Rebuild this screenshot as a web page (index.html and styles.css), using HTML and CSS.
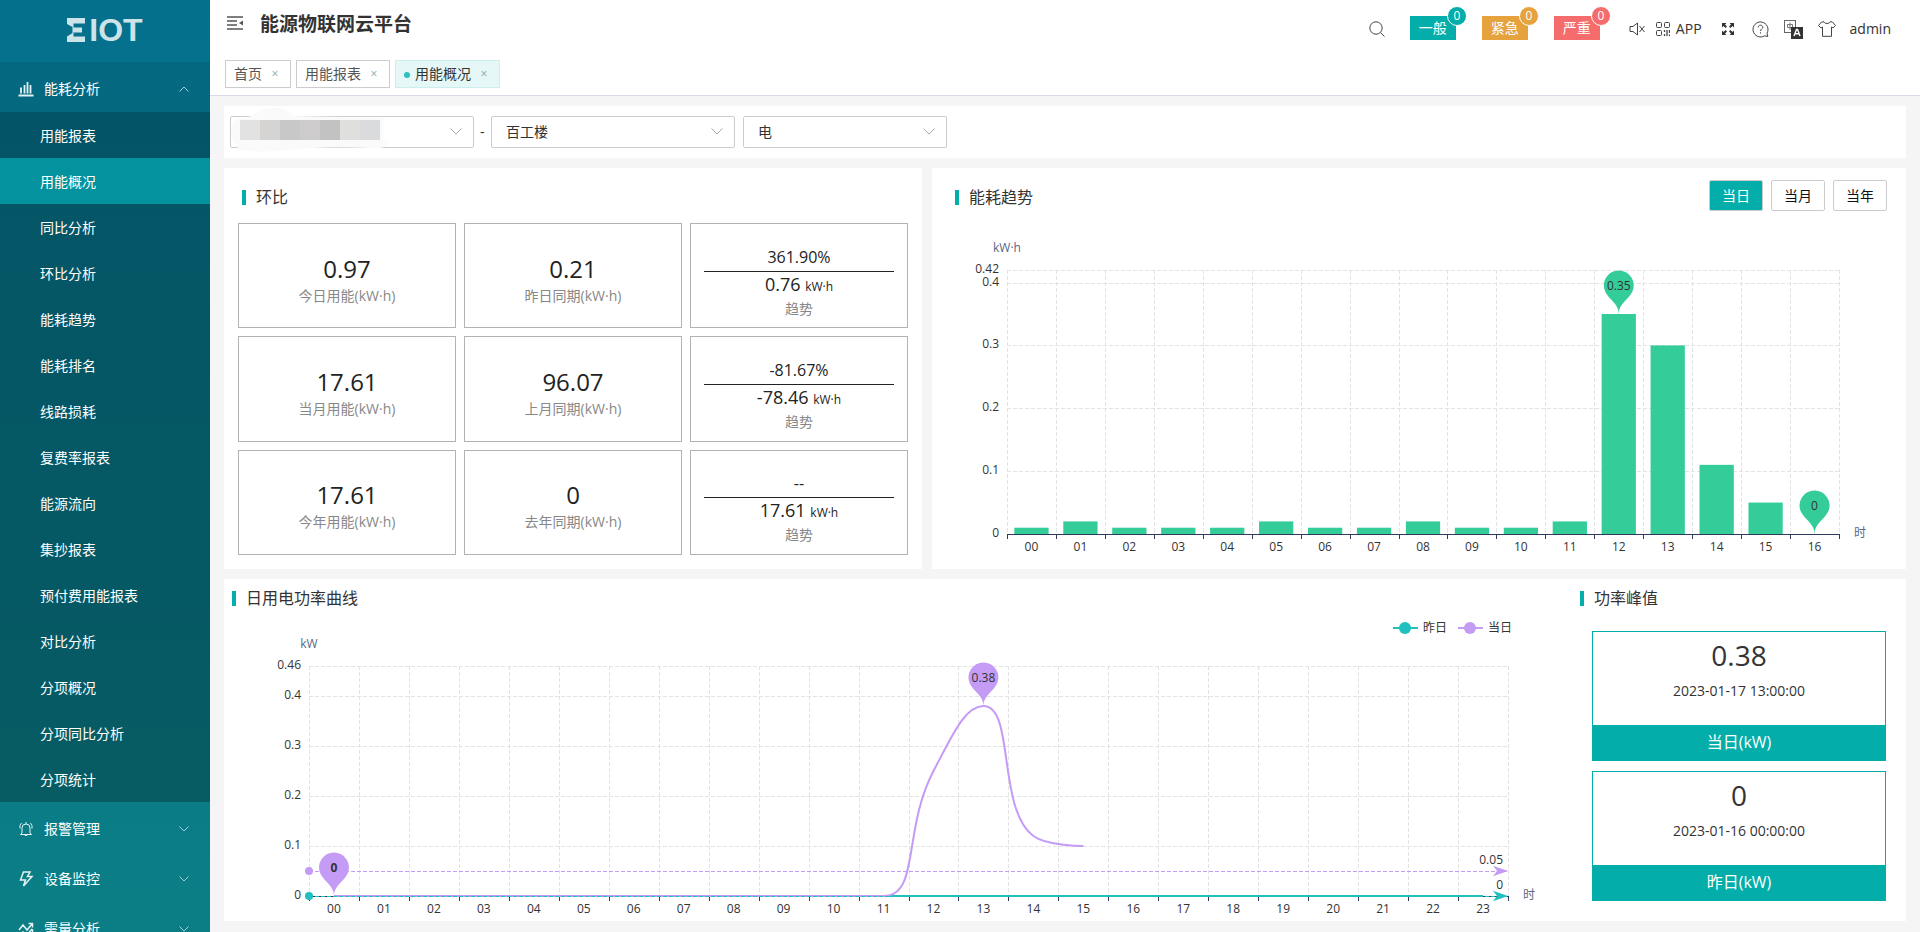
FILE: index.html
```html
<!DOCTYPE html>
<html lang="zh-CN">
<head>
<meta charset="utf-8">
<title>能源物联网云平台</title>
<link rel="stylesheet" href="styles.css">
</head>
<body>
<div class="app">
  <aside class="sidebar">
    <div class="logo">
      <svg class="logo-mark" viewBox="0 0 18 24" width="18" height="24" aria-hidden="true"><path d="M0 0H18V5.500H6.500V9.500H15V14.500H6.500V18.500H18V24H0V18.500L5.500 15V9L0 6Z"/></svg>
      <span class="logo-text">IOT</span>
    </div>
    <nav class="menu">
      <button class="group open" type="button">
        <svg class="group-icon" viewBox="0 0 16 16" width="16" height="16" aria-hidden="true"><path d="M.5 14.500h15M3 12.500V6.500M6.500 12.500V4M9.500 12.500V1M12.500 12.500V4" stroke-width="1.800"/></svg>
        <span>能耗分析</span>
        <svg class="caret" viewBox="0 0 10 6" width="10" height="6" aria-hidden="true"><path d="M.5 5.500 5 1l4.500 4.500"/></svg>
      </button>
      <ul class="submenu">
        <li><a href="#">用能报表</a></li>
        <li><a href="#" class="active">用能概况</a></li>
        <li><a href="#">同比分析</a></li>
        <li><a href="#">环比分析</a></li>
        <li><a href="#">能耗趋势</a></li>
        <li><a href="#">能耗排名</a></li>
        <li><a href="#">线路损耗</a></li>
        <li><a href="#">复费率报表</a></li>
        <li><a href="#">能源流向</a></li>
        <li><a href="#">集抄报表</a></li>
        <li><a href="#">预付费用能报表</a></li>
        <li><a href="#">对比分析</a></li>
        <li><a href="#">分项概况</a></li>
        <li><a href="#">分项同比分析</a></li>
        <li><a href="#">分项统计</a></li>
      </ul>
      <button class="group" type="button">
        <svg class="group-icon" viewBox="0 0 16 16" width="16" height="16" aria-hidden="true"><path d="M4 12V7a4 4 0 0 1 8 0v5l1.500 1.500h-11zM6.800 14.500h2.400M8 1v2M3.500 2 2 4.500v3M12.500 2 14 4.500v3"/></svg>
        <span>报警管理</span>
        <svg class="caret" viewBox="0 0 10 6" width="10" height="6" aria-hidden="true"><path d="M.5.5 5 5 9.500.5"/></svg>
      </button>
      <button class="group" type="button">
        <svg class="group-icon" viewBox="0 0 16 16" width="16" height="16" aria-hidden="true"><path d="M5.500 1H12L9.500 5.500H14L5.500 15 7.500 9H2.500z" stroke-width="1.500"/></svg>
        <span>设备监控</span>
        <svg class="caret" viewBox="0 0 10 6" width="10" height="6" aria-hidden="true"><path d="M.5.5 5 5 9.500.5"/></svg>
      </button>
      <button class="group" type="button">
        <svg class="group-icon" viewBox="0 0 16 16" width="16" height="16" aria-hidden="true"><path d="M1 9 5 4l4 5 5-6M10.500 2.500H14.500V6.500M1 14l4-3 4 3 5-6M14.500 8v7" stroke-width="1.500"/></svg>
        <span>需量分析</span>
        <svg class="caret" viewBox="0 0 10 6" width="10" height="6" aria-hidden="true"><path d="M.5.5 5 5 9.500.5"/></svg>
      </button>
    </nav>
  </aside>

  <div class="main">
    <header class="header">
      <div class="topbar">
        <button class="icon-btn" type="button" aria-label="收起菜单">
          <svg viewBox="0 0 16 14" width="16" height="14" aria-hidden="true"><path d="M0 1h16M0 5h10M0 9h10M0 13h16" fill="none" stroke="#555" stroke-width="1.500"/><path d="M16 4.500v5L12 7z" fill="#555"/></svg>
        </button>
        <h1 class="title">能源物联网云平台</h1>
        <div class="tools">
          <button class="icon-btn search" type="button" aria-label="搜索">
            <svg class="line" viewBox="0 0 16 16" width="16" height="16"><circle cx="7" cy="7" r="6.200"/><path d="m11.500 11.500 4 4"/></svg>
          </button>
          <a class="alarm normal" href="#">一般<span class="count">0</span></a>
          <a class="alarm urgent" href="#">紧急<span class="count">0</span></a>
          <a class="alarm severe" href="#">严重<span class="count">0</span></a>
          <button class="icon-btn mute" type="button" aria-label="静音">
            <svg class="line" viewBox="0 0 16 14" width="16" height="14"><path d="M1 4.500h3L8.500 1v12L4 9.500H1zM10.500 4l5 6M15.500 4l-5 6"/></svg>
          </button>
          <a class="app-link" href="#">
            <svg class="line" viewBox="0 0 14 14" width="14" height="14" aria-hidden="true"><rect x=".5" y=".5" width="5" height="5" rx="1"/><rect x="8.500" y=".5" width="5" height="5" rx="1"/><rect x=".5" y="8.500" width="5" height="5" rx="1"/><path d="M8.500 8v2M8.500 12v2M11 8v6M13.500 8v3M13.500 12.500V14" stroke-width="1.300"/></svg>
            APP</a>
          <button class="icon-btn full" type="button" aria-label="全屏">
            <svg viewBox="0 0 12 12" width="12" height="12"><path d="M0 0h4.500L3 1.500l2 2L3.500 5l-2-2L0 4.500zM12 0v4.500L10.500 3l-2 2L7 3.500l2-2L7.500 0zM0 12V7.500L1.500 9l2-2L5 8.500l-2 2L4.500 12zM12 12H7.500L9 10.500l-2-2L8.500 7l2 2L12 7.500z" fill="#333"/></svg>
          </button>
          <button class="icon-btn help" type="button" aria-label="帮助">
            <svg class="line" viewBox="0 0 17 17" width="17" height="17"><path d="M12.500 14.800A7.500 7.500 0 1 1 15 12.200L15.800 15.500z"/><path d="M6.200 6.500C6.200 5 7.200 4.200 8.500 4.200s2.300.8 2.300 2.100c0 1.700-2.300 1.700-2.300 3.700M8.500 11.300v1.200"/></svg>
          </button>
          <button class="icon-btn lang" type="button" aria-label="语言">
            <svg viewBox="0 0 19 19" width="19" height="19"><rect x=".5" y=".5" width="11" height="12" fill="#fff" stroke="#666"/><path d="M3.500 4.500h5v3h-5zM6 2.500V10" fill="none" stroke="#777"/><rect x="7" y="7" width="12" height="12" fill="#333"/><path d="m10 16 2.500-6.500h1L16 16M11.200 13.800h3.600" fill="none" stroke="#fff" stroke-width="1.400"/></svg>
          </button>
          <button class="icon-btn skin" type="button" aria-label="主题">
            <svg class="line" viewBox="0 0 18 16" width="18" height="16"><path d="M6 .8C6.500 3 11.500 3 12 .8L14.500 1 17.500 4.500 15 7l-1.500-1v9.300h-9V6L3 7 .5 4.500 3.500 1z"/></svg>
          </button>
          <a class="user" href="#">admin</a>
        </div>
      </div>
      <div class="tabs">
        <div class="tab"><a href="#">首页</a><button type="button" aria-label="关闭首页">×</button></div>
        <div class="tab"><a href="#">用能报表</a><button type="button" aria-label="关闭用能报表">×</button></div>
        <div class="tab current"><a href="#">用能概况</a><button type="button" aria-label="关闭用能概况">×</button></div>
      </div>
    </header>

    <main class="content">
      <form class="filters">
        <div class="select wide">
          <select aria-label="项目"><option></option></select>
          <svg class="chevron" viewBox="0 0 12 7" width="12" height="7" aria-hidden="true"><path d="M.5.5 6 6 11.500.5"/></svg>
          <svg class="mosaic" viewBox="0 0 160 46" width="160" height="46" aria-hidden="true">
            <path d="M1 18Q4 10 12 12L20 9Q32 0 46 1Q58 2 62 9L110 10L152 11V33Q160 34 156 39Q150 42 140 41Q90 39 60 43Q20 46 9 43Q-2 34 1 18Z" fill="#fafafa"/>
            <rect x="9" y="13" width="20" height="20" fill="#e2e2e2"/><rect x="29" y="13" width="20" height="20" fill="#d5d4d2"/><rect x="49" y="13" width="20" height="20" fill="#c8c8c8"/><rect x="69" y="13" width="20" height="20" fill="#cdcbcc"/><rect x="89" y="13" width="20" height="20" fill="#c2c2c2"/><rect x="109" y="13" width="20" height="20" fill="#dfdfde"/><rect x="129" y="13" width="20" height="20" fill="#dadbdd"/>
          </svg>
        </div>
        <span class="dash">-</span>
        <div class="select wide">
          <select aria-label="建筑"><option>百工楼</option></select>
          <svg class="chevron" viewBox="0 0 12 7" width="12" height="7" aria-hidden="true"><path d="M.5.5 6 6 11.500.5"/></svg>
        </div>
        <div class="select">
          <select aria-label="能源类型"><option>电</option></select>
          <svg class="chevron" viewBox="0 0 12 7" width="12" height="7" aria-hidden="true"><path d="M.5.5 6 6 11.500.5"/></svg>
        </div>
      </form>

      <div class="row upper">
        <section class="panel compare">
          <h2 class="heading">环比</h2>
          <div class="cells">
            <div class="cell"><strong>0.97</strong><span>今日用能(kW·h)</span></div>
            <div class="cell"><strong>0.21</strong><span>昨日同期(kW·h)</span></div>
            <div class="cell trend"><b>361.90%</b><i>0.76 <small>kW·h</small></i><span>趋势</span></div>
            <div class="cell"><strong>17.61</strong><span>当月用能(kW·h)</span></div>
            <div class="cell"><strong>96.07</strong><span>上月同期(kW·h)</span></div>
            <div class="cell trend"><b>-81.67%</b><i>-78.46 <small>kW·h</small></i><span>趋势</span></div>
            <div class="cell"><strong>17.61</strong><span>今年用能(kW·h)</span></div>
            <div class="cell"><strong>0</strong><span>去年同期(kW·h)</span></div>
            <div class="cell trend"><b>--</b><i>17.61 <small>kW·h</small></i><span>趋势</span></div>
          </div>
        </section>
        <section class="panel usage">
          <div class="usage-head">
            <h2 class="heading">能耗趋势</h2>
            <div class="periods">
              <button class="period on" type="button">当日</button>
              <button class="period" type="button">当月</button>
              <button class="period" type="button">当年</button>
            </div>
          </div>
          <div class="chart" id="usage-chart"></div>
        </section>
      </div>

      <div class="row lower panel">
        <section class="power">
          <h2 class="heading">日用电功率曲线</h2>
          <div class="chart" id="power-chart"></div>
        </section>
        <section class="peaks">
          <h2 class="heading">功率峰值</h2>
          <div class="peak"><strong>0.38</strong><time>2023-01-17 13:00:00</time><span>当日(kW)</span></div>
          <div class="peak"><strong>0</strong><time>2023-01-16 00:00:00</time><span>昨日(kW)</span></div>
        </section>
      </div>
    </main>
  </div>
</div>
<script src="charts.js"></script>
</body>
</html>
```

FILE: styles.css
```css
* { box-sizing: border-box; }

body {
  margin: 0;
  background: #f5f5f5;
  color: #333;
  font: 14px/20px "Open Sans", "Noto Sans CJK SC", sans-serif;
}

a { color: inherit; text-decoration: none; }

button {
  padding: 0;
  border: 0;
  background: none;
  color: inherit;
  font: inherit;
  cursor: pointer;
}

h1, h2, ul { margin: 0; padding: 0; }

.app {
  display: grid;
  grid-template-columns: 210px minmax(0, 1fr);
  height: 100vh;
  overflow: hidden;
}

/* Sidebar */
.sidebar {
  overflow: hidden;
  background: linear-gradient(#05708c, #0b7e85);
  color: #fff;
}

.logo {
  display: flex;
  align-items: center;
  justify-content: center;
  gap: 4px;
  height: 62px;
  padding-bottom: 2px;
  color: #cde3ea;
}

.logo-mark { fill: currentColor; }

.logo-text {
  font-family: "Liberation Sans", sans-serif;
  font-size: 32px;
  font-weight: 700;
  line-height: 32px;
}

.group {
  display: flex;
  align-items: center;
  gap: 10px;
  width: 100%;
  height: 50px;
  padding: 4px 21px 0 18px;
  text-align: left;
}

.group.open { background: rgba(0, 0, 0, .08); }
.group span { flex: 1; }

.group-icon, .caret {
  fill: none;
  stroke: #e3f2f4;
}

.caret { stroke: #a5cfd6; }

.submenu {
  list-style: none;
  background: rgba(0, 0, 0, .26);
}

.submenu a {
  display: block;
  padding: 2px 0 0 40px;
  line-height: 44px;
}

.submenu .active { background: #03929e; }

/* Header */
.main {
  display: flex;
  flex-direction: column;
  min-width: 0;
}

.header {
  padding: 0 15px;
  border-bottom: 1px solid #d8dce8;
  background: #fff;
}

.topbar {
  display: flex;
  align-items: center;
  gap: 17px;
  height: 46px;
  padding-left: 2px;
}

.title {
  flex: 1;
  padding-top: 2px;
  font-size: 19px;
  line-height: 28px;
}

.icon-btn svg { display: block; }

.line {
  fill: none;
  stroke: #444;
}

.tools {
  display: flex;
  align-items: center;
  padding: 12px 14px 0 0;
}

.search { margin-right: 25px; }

.alarm {
  position: relative;
  width: 46px;
  margin: 0 26px 2px 0;
  color: #fff;
  line-height: 24px;
  text-align: center;
}

.normal, .normal .count { background: #03aeaa; }
.urgent, .urgent .count { background: #e6a23c; }
.severe, .severe .count { background: #f56c6c; }

.count {
  position: absolute;
  top: -10px;
  right: -11px;
  width: 20px;
  border: 1px solid #fff;
  border-radius: 10px;
  font-size: 12px;
  line-height: 18px;
}

.mute { margin: 0 11px 0 3px; }

.app-link {
  display: flex;
  align-items: center;
  gap: 6px;
  margin-right: 20px;
}

.full { margin-right: 18px; }
.help { margin-right: 15px; }
.lang { margin-right: 15px; }
.skin { margin-right: 14px; }

.tabs {
  display: flex;
  gap: 5px;
  padding: 14px 0 7px;
}

.tab {
  display: flex;
  align-items: center;
  height: 28px;
  padding: 0 8px;
  border: 1px solid #ccc;
  color: #555;
}

.tab button {
  width: 20px;
  padding-left: 6px;
  color: #8aa;
  font-size: 12px;
}

.tab.current {
  border-color: #c9eeec;
  background: #e5f7f7;
  color: #333;
}

.tab.current::before {
  content: "";
  width: 6px;
  height: 6px;
  margin: 2px 5px 0 0;
  border-radius: 50%;
  background: #2fbfbf;
}

/* Content */
.content {
  display: flex;
  flex: 1;
  flex-direction: column;
  gap: 10px;
  min-height: 0;
  padding: 10px 14px 11px;
}

.filters {
  display: flex;
  align-items: center;
  gap: 8px;
  padding: 10px 6px;
  background: #fff;
}

.select {
  position: relative;
  width: 204px;
}

.select.wide { width: 244px; }

.select select {
  width: 100%;
  height: 32px;
  padding: 0 14px;
  border: 1px solid #ccc;
  border-radius: 2px;
  appearance: none;
  background: #fff;
  color: #333;
  font: inherit;
}

.chevron {
  position: absolute;
  top: 12px;
  right: 12px;
  fill: none;
  stroke: #aaa;
  pointer-events: none;
}

.mosaic {
  position: absolute;
  top: -9px;
  left: 1px;
  pointer-events: none;
}

.dash { width: 1px; margin: 0 2px 0 -2px; }
.panel { background: #fff; }

.row {
  display: grid;
  min-height: 0;
}

.upper {
  flex: 401 1 0;
  grid-template-columns: 698fr 974fr;
  gap: 10px;
}

.lower {
  flex: 342 1 0;
  grid-template-columns: minmax(0, 1fr) 336px;
}

.heading {
  display: flex;
  align-items: center;
  gap: 10px;
  font-size: 16px;
  font-weight: 400;
  line-height: 24px;
}

.heading::before {
  content: "";
  width: 4px;
  height: 15px;
  background: #03aeaa;
}

.compare {
  display: flex;
  flex-direction: column;
  padding: 17px 14px 14px;
}

.compare .heading { padding-left: 4px; }

.cells {
  display: grid;
  flex: 1;
  grid-template-columns: repeat(3, 1fr);
  grid-auto-rows: 1fr;
  gap: 8px;
  margin-top: 14px;
}

.cell {
  display: flex;
  flex-direction: column;
  align-items: center;
  justify-content: center;
  padding: 6px 13px 0;
  border: 1px solid #b3b3b3;
  color: #222;
}

.cell.trend { padding-top: 10px; }

.cell strong {
  font-size: 24px;
  font-weight: 400;
  line-height: 34px;
}

.cell span { color: #888; }

.cell b, .cell i {
  font-size: 16px;
  font-style: normal;
  font-weight: 400;
  line-height: 28px;
}

.cell b {
  width: 100%;
  border-bottom: 1px solid #222;
  text-align: center;
}

.cell i {
  font-size: 18px;
  line-height: 24px;
}

.cell small { font-size: 12px; }

.usage, .power {
  display: flex;
  flex-direction: column;
  min-width: 0;
}

.usage-head {
  display: flex;
  align-items: flex-start;
  justify-content: space-between;
  padding: 12px 19px 9px 23px;
}

.usage .heading { padding-top: 5px; }

.periods {
  display: flex;
  gap: 8px;
}

.period {
  width: 54px;
  height: 31px;
  border: 1px solid #ccc;
  border-radius: 2px;
  color: #111;
}

.period.on {
  background: #03aeaa;
  color: #fff;
}

.chart {
  flex: 1;
  min-height: 0;
  overflow: hidden;
}

.chart svg { display: block; }

.chart text {
  fill: #333;
  font-size: 12px;
}

.chart .axis-name { fill: #5a6785; }
.grid-line { stroke: #e3e3e3; stroke-dasharray: 4 2; }
.axis-line { stroke: #2f3a5f; }

.power .heading { padding: 7px 0 0 8px; }

.peaks {
  display: flex;
  flex-direction: column;
  gap: 10px;
  padding: 7px 20px 20px 22px;
}

.peaks .heading {
  margin: 0 0 11px -12px;
}

.peak {
  display: flex;
  flex: 1;
  flex-direction: column;
  align-items: center;
  border: 1px solid #03aeaa;
}

.peak strong {
  padding-top: 5px;
  font-size: 28px;
  font-weight: 400;
  line-height: 36px;
}

.peak time {
  flex: 1;
  padding-top: 8px;
}

.peak span {
  align-self: stretch;
  background: #03aeaa;
  color: #fff;
  font-size: 16px;
  line-height: 35px;
  text-align: center;
}
```

FILE: charts.js
```js
(function () {
  var TEAL = '#1fc0be', PURPLE = '#c49bf5', GREEN = '#34cc99';

  function pad(n) { return (n < 10 ? '0' : '') + n; }
  function line(x1, y1, x2, y2, attrs) {
    return '<line x1="' + x1 + '" y1="' + y1 + '" x2="' + x2 + '" y2="' + y2 + '" ' + attrs + '/>';
  }
  function text(x, y, anchor, value, attrs) {
    return '<text x="' + x + '" y="' + y + '" text-anchor="' + anchor + '" ' + (attrs || '') + '>' + value + '</text>';
  }
  function crisp(v) { return Math.round(v) + 0.5; }

  /* Balloon whose tip sits on (x, y). */
  function pin(x, y, color, label, labelAttrs) {
    return '<g transform="translate(' + x + ' ' + y + ')">' +
      '<path fill="' + color + '" d="M-13.550-22.140A15 15 0 1 1 13.550-22.140C9.690-14.010 0-10.500 0 0C0-10.500-9.690-14.010-13.550-22.140Z"/>' +
      text(0, -24, 'middle', label, labelAttrs) + '</g>';
  }

  function arrow(x, y, color) {
    return '<path fill="' + color + '" d="M' + x + ' ' + y + 'l-15-5.300 4 5.300-4 5.300z"/>';
  }

  function frame(el, o) {
    var w = el.clientWidth, h = el.clientHeight;
    var f = { w: w, h: h, l: o.left, r: w - o.right, t: o.top, b: h - o.bottom };
    f.step = (f.r - f.l) / o.count;
    f.x = function (i) { return f.l + f.step * (i + 0.5); };
    f.y = function (v) { return f.b - (f.b - f.t) * v / o.max; };
    var s = '', i;
    [0.1, 0.2, 0.3, 0.4, o.max].forEach(function (v) {
      s += line(f.l, crisp(f.y(v)), f.r, crisp(f.y(v)), 'class="grid-line"');
      s += text(f.l - 8, f.y(v) + 3, 'end', v);
    });
    s += text(f.l - 8, f.b + 3, 'end', '0');
    for (i = 0; i <= o.count; i++) {
      var gx = crisp(f.l + f.step * i);
      s += line(gx, f.t, gx, f.b, 'class="grid-line"');
      s += line(gx, f.b, gx, f.b + 5, 'class="axis-line"');
      if (i < o.count) s += text(f.x(i), f.b + 17, 'middle', pad(i));
    }
    s += line(f.l, crisp(f.b), f.r, crisp(f.b), 'class="axis-line"');
    s += text(f.l, f.t - 18, 'middle', o.unit, 'class="axis-name"');
    s += text(f.r + 15, f.b + 3, 'start', '时', 'class="axis-name"');
    f.svg = s;
    return f;
  }

  function mount(el, f, body) {
    el.innerHTML = '<svg width="' + f.w + '" height="' + f.h + '" role="img">' + f.svg + body + '</svg>';
  }

  function drawUsage() {
    var el = document.getElementById('usage-chart');
    var data = [.01, .02, .01, .01, .01, .02, .01, .01, .02, .01, .01, .02, .35, .3, .11, .05, 0];
    var f = frame(el, { left: 75, right: 67, top: 50, bottom: 35, count: 17, max: 0.42, unit: 'kW·h' });
    var bw = f.step * 0.7, s = '';
    data.forEach(function (v, i) {
      s += '<rect x="' + (f.x(i) - bw / 2) + '" y="' + f.y(v) + '" width="' + bw + '" height="' + (f.b - f.y(v)) + '" fill="' + GREEN + '"/>';
    });
    s += pin(f.x(12), f.y(.35), GREEN, '0.35');
    s += pin(f.x(16), f.y(0), GREEN, '0');
    mount(el, f, s);
  }

  /* Smooth curve whose control points never leave the span of their neighbours. */
  function smooth(pts) {
    function clamp(v, a, b) { return Math.max(Math.min(a, b), Math.min(Math.max(a, b), v)); }
    var d = 'M' + pts[0], out = pts[0];
    for (var i = 1; i < pts.length; i++) {
      var q = pts[i - 1], p = pts[i], n = pts[i + 1], into = p, next = p;
      if (n) {
        var lp = Math.hypot(p[0] - q[0], p[1] - q[1]), ln = Math.hypot(n[0] - p[0], n[1] - p[1]);
        var k = 0.5 * ln / (ln + lp);
        next = [0, 1].map(function (a) { return clamp(p[a] + (n[a] - q[a]) * k, p[a], n[a]); });
        into = [0, 1].map(function (a) { return clamp(p[a] - (next[a] - p[a]) * lp / ln, p[a], q[a]); });
        next = [0, 1].map(function (a) { return p[a] + (p[a] - into[a]) * ln / lp; });
      }
      d += 'C' + out + ' ' + into + ' ' + p;
      out = next;
    }
    return d;
  }

  function drawPower() {
    var el = document.getElementById('power-chart');
    var today = [0, 0, 0, 0, 0, 0, 0, 0, 0, 0, 0, 0, .25, .38, .12, .1];
    var f = frame(el, { left: 85, right: 62, top: 56, bottom: 25, count: 24, max: 0.46, unit: 'kW' });
    var base = crisp(f.b), avg = crisp(f.y(.05)), s = '';
    s += line(f.x(0), f.b, f.x(23), f.b, 'stroke="' + TEAL + '" stroke-width="2"');
    s += '<path fill="none" stroke="' + PURPLE + '" stroke-width="2" d="' +
      smooth(today.map(function (v, i) { return [f.x(i), f.y(v)]; })) + '"/>';
    s += line(f.l, base, f.r, base, 'stroke="' + TEAL + '" stroke-dasharray="4 2"');
    s += line(f.l, avg, f.r, avg, 'stroke="' + PURPLE + '" stroke-dasharray="4 2"');
    s += '<circle cx="' + f.l + '" cy="' + f.b + '" r="4" fill="' + TEAL + '"/>';
    s += '<circle cx="' + f.l + '" cy="' + f.y(.05) + '" r="4" fill="' + PURPLE + '"/>';
    s += arrow(f.r, f.b, TEAL) + arrow(f.r, f.y(.05), PURPLE);
    s += text(f.r - 5, avg - 8, 'end', '0.05') + text(f.r - 5, base - 8, 'end', '0');
    s += pin(f.x(0), f.b, PURPLE, '0', 'font-weight="700"');
    s += pin(f.x(13), f.y(.38), PURPLE, '0.38');
    [['昨日', TEAL, 177], ['当日', PURPLE, 112]].forEach(function (k) {
      var x = f.w - k[2];
      s += line(x, 18, x + 25, 18, 'stroke="' + k[1] + '" stroke-width="2"');
      s += '<circle cx="' + (x + 12) + '" cy="18" r="6" fill="' + k[1] + '"/>';
      s += text(x + 30, 22, 'start', k[0]);
    });
    mount(el, f, s);
  }

  function draw() { drawUsage(); drawPower(); }
  draw();
  window.addEventListener('resize', draw);
})();
```
